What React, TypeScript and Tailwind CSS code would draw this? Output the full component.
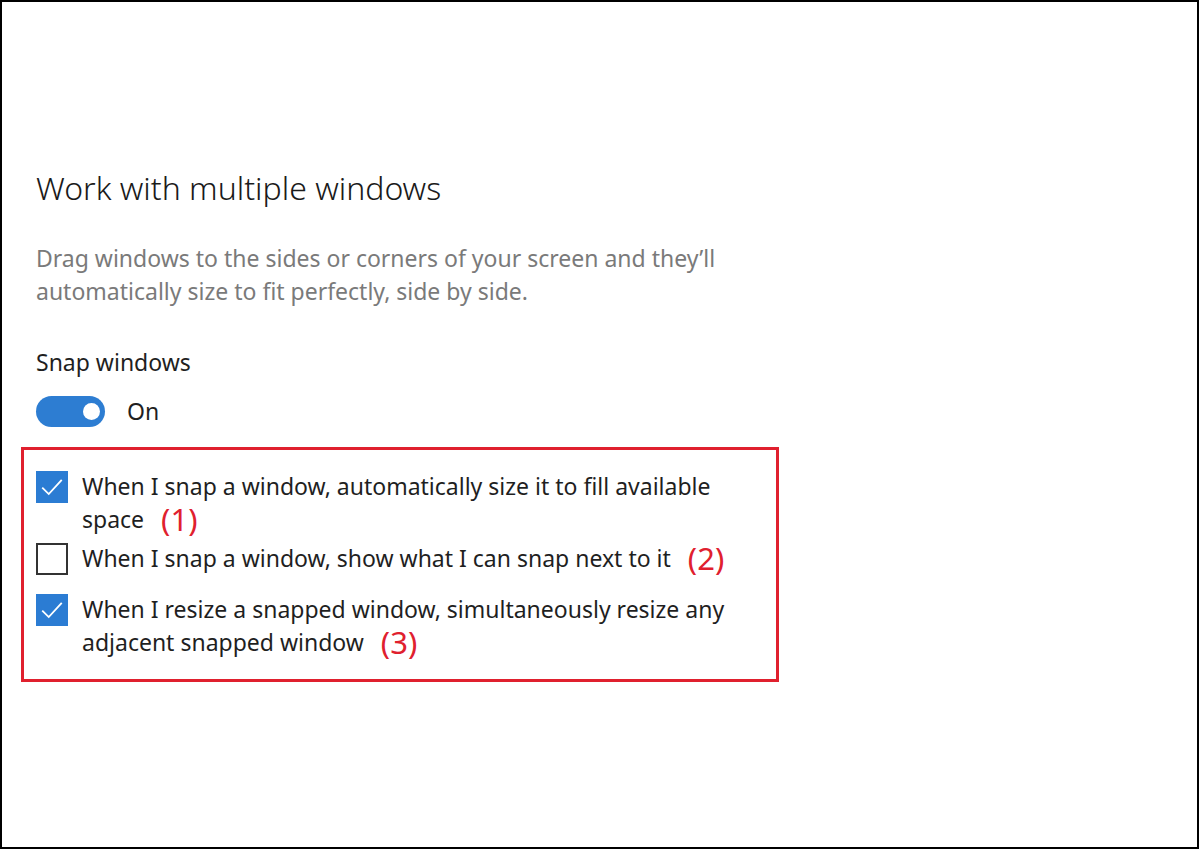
import type { ReactNode } from 'react'

function Checkbox({ checked }: { checked: boolean }) {
  if (checked) {
    return (
      <span className="w-8 h-8 shrink-0 bg-[#2b7cd3] flex items-center justify-center">
        <svg width="26" height="26" viewBox="0 0 24 24" fill="none">
          <path d="M3 12.5 L9 18.5 L21 5.5" stroke="white" strokeWidth="1.7" />
        </svg>
      </span>
    )
  }
  return <span className="w-8 h-8 shrink-0 border-2 border-[#333333] bg-white" />
}

function Option({
  checked,
  className,
  children,
}: {
  checked: boolean
  className?: string
  children: ReactNode
}) {
  return (
    <div className={`flex items-start gap-[14px] ${className ?? ''}`}>
      <Checkbox checked={checked} />
      <p className="text-[23px] leading-[33px] text-[#1f1f1f] -mt-[1px] whitespace-nowrap">
        {children}
      </p>
    </div>
  )
}

function Mark({ n }: { n: number }) {
  return (
    <span className="inline-block align-top h-[33px] text-[#e0202e] text-[31px] leading-[33px] ml-[17px]">
      ({n})
    </span>
  )
}

export default function App() {
  return (
    <div className="w-[1200px] h-[850px] bg-white overflow-hidden">
      <div
        className="w-[1199px] h-[849px] border-2 border-black bg-white pt-[164px] pl-[34px]"
        style={{ fontFamily: '"Noto Sans", "Open Sans", sans-serif' }}
      >
        <h1 className="text-[32px] leading-[44px] font-light text-[#1a1a1a]">
          Work with multiple windows
        </h1>
        <p className="mt-[32px] text-[23px] leading-[33px] text-[#7a7a7a] whitespace-nowrap">
          Drag windows to the sides or corners of your screen and they’ll
          <br />
          automatically size to fit perfectly, side by side.
        </p>
        <p className="mt-[38px] text-[23px] leading-[33px] text-[#1f1f1f]">Snap windows</p>
        <div className="mt-[15px] flex items-center gap-[22px]">
          <span className="w-[69px] h-[31px] rounded-full bg-[#2d7dd2] flex items-center justify-end pr-[5px]">
            <span className="w-[17px] h-[17px] rounded-full bg-white" />
          </span>
          <span className="text-[23px] text-[#1f1f1f]">On</span>
        </div>
        <div className="mt-[18px] -ml-[15px] w-[758px] border-[3px] border-[#e0202e] pt-[21px] pb-[20px] pl-[12px] flex flex-col">
          <Option checked>
            When I snap a window, automatically size it to fill available
            <br />
            space
            <Mark n={1} />
          </Option>
          <Option checked={false} className="mt-[7px]">
            When I snap a window, show what I can snap next to it
            <Mark n={2} />
          </Option>
          <Option checked className="mt-[19px]">
            When I resize a snapped window, simultaneously resize any
            <br />
            adjacent snapped window
            <Mark n={3} />
          </Option>
        </div>
      </div>
    </div>
  )
}
